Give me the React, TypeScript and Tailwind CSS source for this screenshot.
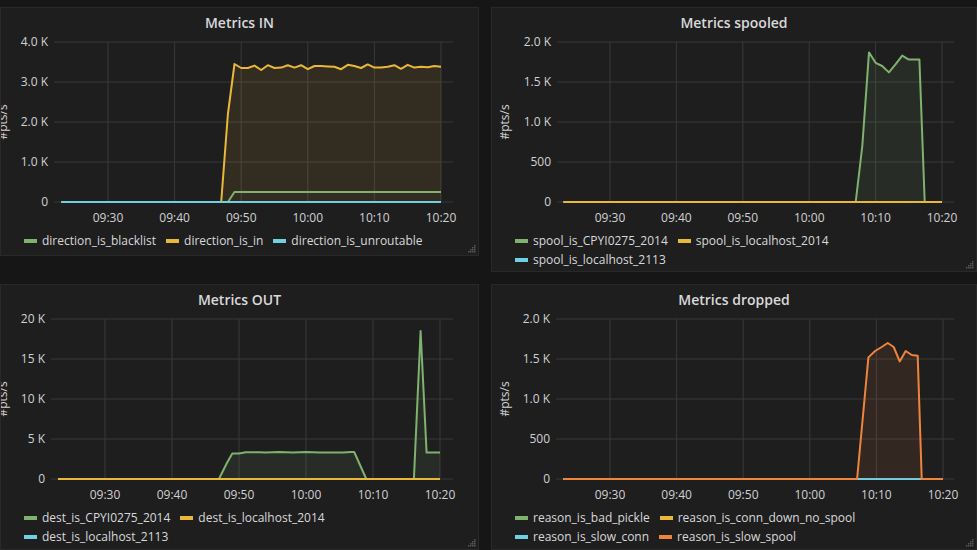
import React from 'react';

type Pt = [number, number];

interface Series {
  name: string;
  color: string;
  points: Pt[];
  fill?: boolean;
}

interface Geo {
  plotLeft: number;
  plotRight: number;
  x0930: number;
  x1020: number;
  labelRight: number;
  ylabelX: number;
}

interface PanelProps {
  title: string;
  width: number;
  height: number;
  geo: Geo;
  yTicks: string[];
  yMax: number;
  series: Series[];
  legend: string[][];
}

const GREEN = '#7eb26d';
const YELLOW = '#eab839';
const CYAN = '#6ed0e0';
const ORANGE = '#ef843c';

const TOP = 35;
const ZERO = 195;
const times = ['09:30', '09:40', '09:50', '10:00', '10:10', '10:20'];

const colorOf: Record<string, string> = {};

const Chart: React.FC<{ p: PanelProps }> = ({ p }) => {
  const { geo } = p;
  const ppm = (geo.x1020 - geo.x0930) / 50;
  const X = (t: number) => geo.x0930 + (t - 10) * ppm;
  const Y = (v: number) => ZERO - (v / p.yMax) * (ZERO - TOP);
  const step = (ZERO - TOP) / (p.yTicks.length - 1);

  return (
    <svg width={p.width} height={195} viewBox={`0 28 ${p.width} 195`} className="block overflow-visible">
      {p.yTicks.map((label, i) => {
        const y = ZERO - i * step;
        return (
          <g key={label}>
            <line x1={geo.plotLeft} x2={geo.plotRight} y1={y} y2={y} stroke="#3a393a" strokeWidth={1} />
            <text x={geo.labelRight} y={y + 4} textAnchor="end" fontSize={12} fill="#d0d1d2">
              {label}
            </text>
          </g>
        );
      })}
      {times.map((t, i) => {
        const x = geo.x0930 + i * 10 * ppm;
        return (
          <g key={t}>
            <line x1={x} x2={x} y1={TOP} y2={ZERO} stroke="#3a393a" strokeWidth={1} />
            <text x={x} y={ZERO + 20} textAnchor="middle" fontSize={12} fill="#d0d1d2">
              {t}
            </text>
          </g>
        );
      })}
      <text
        x={geo.ylabelX}
        y={115}
        fontSize={12}
        fill="#d0d1d2"
        textAnchor="middle"
        transform={`rotate(-90 ${geo.ylabelX} 115)`}
        dominantBaseline="middle"
      >
        #pts/s
      </text>
      {p.series.map((s) => {
        const pts = s.points.map(([t, v]) => `${X(t).toFixed(1)},${Y(v).toFixed(1)}`).join(' ');
        const first = s.points[0][0];
        const last = s.points[s.points.length - 1][0];
        return (
          <g key={s.name}>
            {s.fill && (
              <polygon
                points={`${X(first)},${ZERO} ${pts} ${X(last)},${ZERO}`}
                fill={s.color}
                fillOpacity={0.1}
              />
            )}
            <polyline points={pts} fill="none" stroke={s.color} strokeWidth={2} strokeLinejoin="round" />
          </g>
        );
      })}
    </svg>
  );
};

const Grip = () => (
  <svg width={8} height={8} className="absolute right-[2px] bottom-[2px]">
    {[
      [6, 0],
      [6, 2],
      [4, 2],
      [6, 4],
      [4, 4],
      [2, 4],
      [6, 6],
      [4, 6],
      [2, 6],
      [0, 6],
    ].map(([x, y], i) => (
      <rect key={i} x={x} y={y} width={1.5} height={1.5} fill="#555" />
    ))}
  </svg>
);

const Panel: React.FC<{ p: PanelProps }> = ({ p }) => (
  <div
    className="relative overflow-hidden bg-[#1f1e1f] border border-[#292929]"
    style={{ width: p.width, height: p.height }}
  >
    <div className="h-[27px] pt-[4px] text-center text-[14px] font-semibold text-[#d8d9da]">{p.title}</div>
    <Chart p={p} />
    <div className="pl-[23px] pr-2 mt-[1px]">
      {p.legend.map((row, i) => (
        <div key={i} className="flex items-center gap-[10px] h-[19px] text-[12px] text-[#d8d9da]">
          {row.map((name) => (
            <div key={name} className="flex items-center gap-[5px]">
              <span className="inline-block w-[13px] h-[4px]" style={{ background: colorOf[name] }} />
              <span>{name}</span>
            </div>
          ))}
        </div>
      ))}
    </div>
    <Grip />
  </div>
);

const flat = (): Pt[] => [
  [3, 0],
  [60, 0],
];

const inJitter: Pt[] = [
  [3, 0],
  [27, 0],
  [28, 2200],
  [29, 3450],
  [30, 3350],
  [31, 3350],
  [32, 3410],
  [33, 3300],
  [34, 3420],
  [35, 3350],
  [36, 3360],
  [37, 3420],
  [38, 3360],
  [39, 3420],
  [40, 3320],
  [41, 3400],
  [42, 3400],
  [43, 3390],
  [44, 3380],
  [45, 3320],
  [46, 3430],
  [47, 3400],
  [48, 3350],
  [49, 3440],
  [50, 3360],
  [51, 3360],
  [52, 3380],
  [53, 3420],
  [54, 3330],
  [55, 3430],
  [56, 3360],
  [57, 3380],
  [58, 3370],
  [59, 3400],
  [60, 3380],
];

const panels: PanelProps[] = [
  {
    title: 'Metrics IN',
    width: 479,
    height: 249,
    geo: { plotLeft: 53, plotRight: 452, x0930: 107, x1020: 440, labelRight: 47, ylabelX: 3 },
    yTicks: ['0', '1.0 K', '2.0 K', '3.0 K', '4.0 K'],
    yMax: 4000,
    series: [
      { name: 'direction_is_in', color: YELLOW, points: inJitter, fill: true },
      {
        name: 'direction_is_blacklist',
        color: GREEN,
        points: [
          [3, 0],
          [28, 0],
          [29, 250],
          [60, 250],
        ],
      },
      { name: 'direction_is_unroutable', color: CYAN, points: flat() },
    ],
    legend: [['direction_is_blacklist', 'direction_is_in', 'direction_is_unroutable']],
  },
  {
    title: 'Metrics spooled',
    width: 486,
    height: 265,
    geo: { plotLeft: 65, plotRight: 462, x0930: 118, x1020: 450, labelRight: 59, ylabelX: 14 },
    yTicks: ['0', '500', '1.0 K', '1.5 K', '2.0 K'],
    yMax: 2000,
    series: [
      {
        name: 'spool_is_CPYI0275_2014',
        color: GREEN,
        fill: true,
        points: [
          [3, 0],
          [47, 0],
          [48, 700],
          [49, 1870],
          [50, 1740],
          [51, 1700],
          [52, 1620],
          [53, 1720],
          [54, 1830],
          [55, 1780],
          [56.6, 1780],
          [57.4, 0],
          [60, 0],
        ],
      },
      { name: 'spool_is_localhost_2113', color: CYAN, points: flat() },
      { name: 'spool_is_localhost_2014', color: YELLOW, points: flat() },
    ],
    legend: [['spool_is_CPYI0275_2014', 'spool_is_localhost_2014'], ['spool_is_localhost_2113']],
  },
  {
    title: 'Metrics OUT',
    width: 479,
    height: 266,
    geo: { plotLeft: 50, plotRight: 452, x0930: 104, x1020: 439, labelRight: 44, ylabelX: 3 },
    yTicks: ['0', '5 K', '10 K', '15 K', '20 K'],
    yMax: 20000,
    series: [
      {
        name: 'dest_is_CPYI0275_2014',
        color: GREEN,
        fill: true,
        points: [
          [3, 0],
          [27, 0],
          [28.2, 2000],
          [29, 3200],
          [30, 3200],
          [31, 3350],
          [33, 3350],
          [34, 3300],
          [36, 3380],
          [38, 3330],
          [40, 3360],
          [42, 3300],
          [44, 3330],
          [45.5, 3300],
          [46.7, 3380],
          [47.2, 3380],
          [49, 0],
          [56.1, 0],
          [57.1, 18500],
          [58, 3300],
          [60, 3300],
        ],
      },
      { name: 'dest_is_localhost_2113', color: CYAN, points: flat() },
      { name: 'dest_is_localhost_2014', color: YELLOW, points: flat() },
    ],
    legend: [['dest_is_CPYI0275_2014', 'dest_is_localhost_2014'], ['dest_is_localhost_2113']],
  },
  {
    title: 'Metrics dropped',
    width: 486,
    height: 266,
    geo: { plotLeft: 64, plotRight: 462, x0930: 118, x1020: 451, labelRight: 58, ylabelX: 14 },
    yTicks: ['0', '500', '1.0 K', '1.5 K', '2.0 K'],
    yMax: 2000,
    series: [
      { name: 'reason_is_bad_pickle', color: GREEN, points: flat() },
      { name: 'reason_is_conn_down_no_spool', color: YELLOW, points: flat() },
      { name: 'reason_is_slow_conn', color: CYAN, points: flat() },
      {
        name: 'reason_is_slow_spool',
        color: ORANGE,
        fill: true,
        points: [
          [3, 0],
          [47.1, 0],
          [48.8, 1520],
          [49.8, 1600],
          [50.8, 1650],
          [51.7, 1700],
          [52.6, 1650],
          [53.5, 1470],
          [54.4, 1600],
          [55.3, 1550],
          [56.2, 1540],
          [56.8, 0],
          [60, 0],
        ],
      },
    ],
    legend: [
      ['reason_is_bad_pickle', 'reason_is_conn_down_no_spool'],
      ['reason_is_slow_conn', 'reason_is_slow_spool'],
    ],
  },
];

panels.forEach((p) => p.series.forEach((s) => (colorOf[s.name] = s.color)));

const App: React.FC = () => (
  <div
    className="w-[977px] h-[550px] overflow-hidden bg-[#161616] pt-[7px]"
    style={{ fontFamily: '"Open Sans", "Liberation Sans", sans-serif' }}
  >
    <div className="grid grid-cols-[479px_486px] gap-x-[12px] gap-y-[12px] items-start">
      {panels.map((p) => (
        <Panel key={p.title} p={p} />
      ))}
    </div>
  </div>
);

export default App;
